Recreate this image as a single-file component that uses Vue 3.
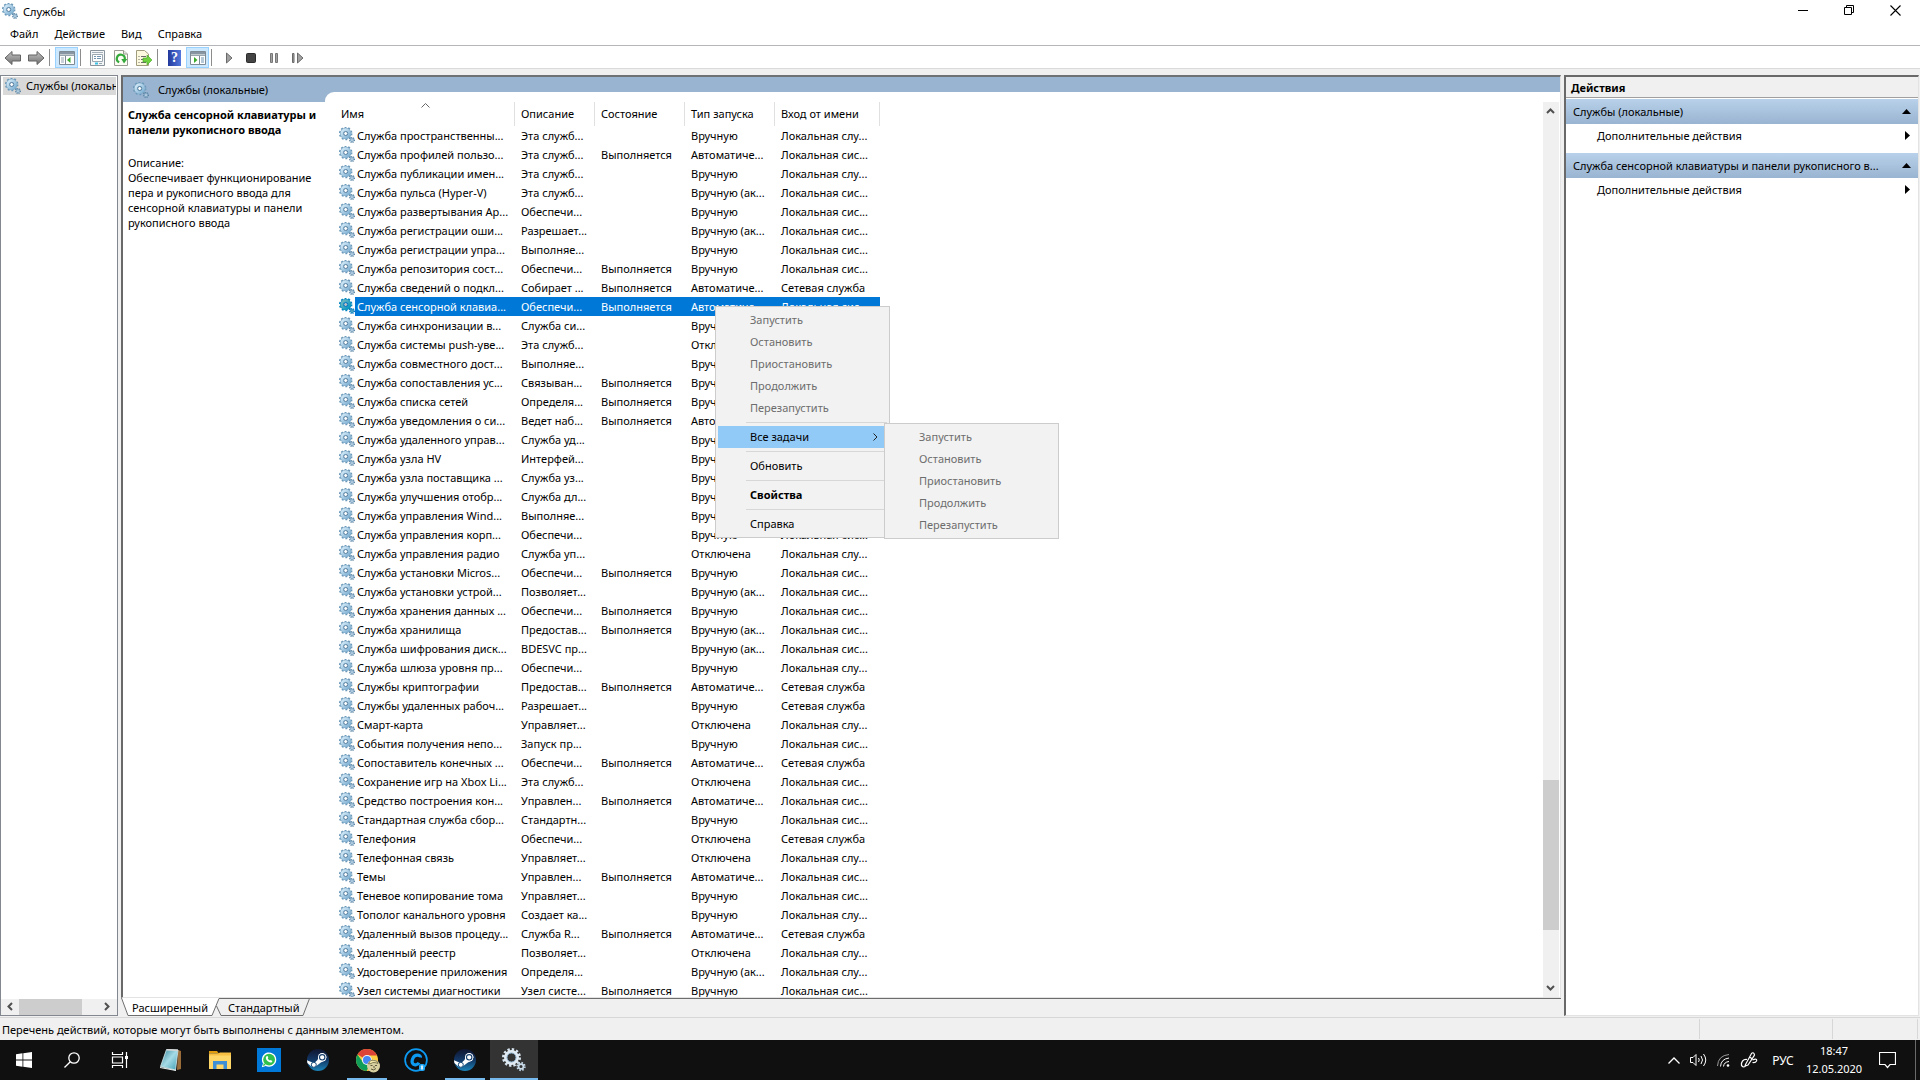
<script setup>
const L = 'Локальная слу...'
const S = 'Локальная сис...'
const N = 'Сетевая служба'
const M = 'Вручную'
const T = 'Вручную (ак...'
const A = 'Автоматиче...'
const D = 'Отключена'
const R = 'Выполняется'

const services = [
  ['Служба пространственны...', 'Эта служб...', '', M, L],
  ['Служба профилей пользо...', 'Эта служб...', R, A, S],
  ['Служба публикации имен...', 'Эта служб...', '', M, L],
  ['Служба пульса (Hyper-V)', 'Эта служб...', '', T, S],
  ['Служба развертывания Ap...', 'Обеспечи...', '', M, S],
  ['Служба регистрации оши...', 'Разрешает...', '', T, S],
  ['Служба регистрации упра...', 'Выполняе...', '', M, S],
  ['Служба репозитория сост...', 'Обеспечи...', R, M, S],
  ['Служба сведений о подкл...', 'Собирает ...', R, A, N],
  ['Служба сенсорной клавиа...', 'Обеспечи...', R, A, S],
  ['Служба синхронизации в...', 'Служба си...', '', M, S],
  ['Служба системы push-уве...', 'Эта служб...', '', D, S],
  ['Служба совместного дост...', 'Выполняе...', '', M, S],
  ['Служба сопоставления ус...', 'Связыван...', R, M, S],
  ['Служба списка сетей', 'Определя...', R, M, L],
  ['Служба уведомления о си...', 'Ведет наб...', R, A, S],
  ['Служба удаленного управ...', 'Служба уд...', '', M, N],
  ['Служба узла HV', 'Интерфей...', '', M, S],
  ['Служба узла поставщика ...', 'Служба уз...', '', M, L],
  ['Служба улучшения отобр...', 'Служба дл...', '', M, S],
  ['Служба управления Wind...', 'Выполняе...', '', M, S],
  ['Служба управления корп...', 'Обеспечи...', '', M, S],
  ['Служба управления радио', 'Служба уп...', '', D, L],
  ['Служба установки Micros...', 'Обеспечи...', R, M, S],
  ['Служба установки устрой...', 'Позволяет...', '', T, S],
  ['Служба хранения данных ...', 'Обеспечи...', R, M, S],
  ['Служба хранилища', 'Предостав...', R, T, S],
  ['Служба шифрования диск...', 'BDESVC пр...', '', T, S],
  ['Служба шлюза уровня пр...', 'Обеспечи...', '', M, L],
  ['Службы криптографии', 'Предостав...', R, A, N],
  ['Службы удаленных рабоч...', 'Разрешает...', '', M, N],
  ['Смарт-карта', 'Управляет...', '', D, L],
  ['События получения непо...', 'Запуск пр...', '', M, S],
  ['Сопоставитель конечных ...', 'Обеспечи...', R, A, N],
  ['Сохранение игр на Xbox Li...', 'Эта служб...', '', D, S],
  ['Средство построения кон...', 'Управлен...', R, A, S],
  ['Стандартная служба сбор...', 'Стандартн...', '', M, S],
  ['Телефония', 'Обеспечи...', '', D, N],
  ['Телефонная связь', 'Управляет...', '', D, L],
  ['Темы', 'Управлен...', R, A, S],
  ['Теневое копирование тома', 'Управляет...', '', M, S],
  ['Тополог канального уровня', 'Создает ка...', '', M, L],
  ['Удаленный вызов процеду...', 'Служба R...', R, A, N],
  ['Удаленный реестр', 'Позволяет...', '', D, L],
  ['Удостоверение приложения', 'Определя...', '', T, L],
  ['Узел системы диагностики', 'Узел систе...', R, M, S],
]
const selected = 9
const columns = ['Имя', 'Описание', 'Состояние', 'Тип запуска', 'Вход от имени']
const menus = ['Файл', 'Действие', 'Вид', 'Справка']
const tasks = ['Запустить', 'Остановить', 'Приостановить', 'Продолжить', 'Перезапустить']
const actionGroups = ['Службы (локальные)', 'Служба сенсорной клавиатуры и панели рукописного в...']
</script>

<template>
  <div class="desktop">
    <svg width="0" height="0" class="defs" aria-hidden="true">
      <defs>
        <linearGradient id="gearFill" x1="0" y1="0" x2="1" y2="1">
          <stop offset="0" stop-color="#d3eaf8" />
          <stop offset="1" stop-color="#7fb0d2" />
        </linearGradient>
        <linearGradient id="steamFill" x1="0" y1="0" x2="0" y2="1">
          <stop offset="0" stop-color="#10152f" />
          <stop offset=".5" stop-color="#123765" />
          <stop offset="1" stop-color="#1b84b8" />
        </linearGradient>
        <linearGradient id="noteFill" x1="0" y1="0" x2="1" y2="1">
          <stop offset="0" stop-color="#2f7f94" />
          <stop offset=".5" stop-color="#a5dbe6" />
          <stop offset="1" stop-color="#3d9db4" />
        </linearGradient>
        <linearGradient id="arrowFill" x1="0" y1="0" x2="0" y2="1">
          <stop offset="0" stop-color="#c4c4c4" />
          <stop offset="1" stop-color="#6f6f6f" />
        </linearGradient>
        <symbol id="gear" viewBox="0 0 16 16">
          <circle cx="6.7" cy="6.5" r="5.8" fill="none" stroke="#6b98b8" stroke-width="1.9" stroke-dasharray="1.9 1.744" />
          <circle cx="6.7" cy="6.5" r="4" fill="none" stroke="#7aa5c4" stroke-width="3.4" />
          <circle cx="6.7" cy="6.5" r="3.8" fill="none" stroke="url(#gearFill)" stroke-width="2.800" />
          <circle cx="6.7" cy="6.5" r="2" fill="#fff" stroke="#4f7b9f" stroke-width="1" />
          <circle cx="13" cy="13" r="2.3" fill="none" stroke="#56809f" stroke-width="1.4" stroke-dasharray="1 .8" />
          <circle cx="13" cy="13" r="1.4" fill="#dcebf5" stroke="#7ba3c2" stroke-width="1.1" />
        </symbol>
        <symbol id="steam" viewBox="0 0 22 22">
          <circle cx="11" cy="11" r="11" fill="url(#steamFill)" />
          <path d="M0 11.2 7 14.2 10.5 11 13 4.8h4l2.4 3-1 3.4-4.5 2.3-4.3 3.2-2.8 1.9-3-1.6L.4 14Z" fill="#fff" />
          <circle cx="15.2" cy="8.3" r="4.2" fill="#fff" />
          <circle cx="15.2" cy="8.3" r="2.7" fill="#fff" stroke="#153e6d" stroke-width="1.1" />
          <circle cx="6.8" cy="15.8" r="2.5" fill="#fff" stroke="#154877" stroke-width="1" />
        </symbol>
      </defs>
    </svg>

    <header class="titlebar">
      <svg class="i16"><use href="#gear" /></svg>
      <h1>Службы</h1>
      <div class="caption">
        <button aria-label="Свернуть"><svg width="11" height="11" viewBox="0 0 11 11"><path d="M0 5.5h10" stroke="#000" /></svg></button>
        <button aria-label="Восстановить"><svg width="11" height="11" viewBox="0 0 11 11" fill="none" stroke="#000"><path d="M.5 2.5h7v7h-7zM2.500 2.500v-2h7v7h-2" /></svg></button>
        <button aria-label="Закрыть"><svg width="11" height="11" viewBox="0 0 11 11"><path d="m.5.5 10 10M10.500.5l-10 10" stroke="#000" stroke-width="1.1" /></svg></button>
      </div>
    </header>

    <nav class="menubar"><button v-for="m in menus" :key="m">{{ m }}</button></nav>

    <div class="toolbar">
      <button aria-label="Назад"><svg class="wide" viewBox="0 0 18 16"><path d="M1 8 8 1.500V5h8.500v6H8v3.500Z" fill="url(#arrowFill)" stroke="#626262" /></svg></button>
      <button aria-label="Вперед"><svg class="wide" viewBox="0 0 18 16"><path d="M17 8 10 1.500V5H1.500v6H10v3.500Z" fill="url(#arrowFill)" stroke="#626262" /></svg></button>
      <i></i>
      <button class="on" aria-label="Дерево консоли"><svg class="i16" viewBox="0 0 16 16"><path d="M.5 1.500h15v13H.5z" fill="#fff" stroke="#7f8b94" /><path d="M1 2h14v2.500H1z" fill="#8796a2" /><path d="M1 5.500h14" stroke="#9aa6ae" /><path d="M6.500 6v8.500" stroke="#7f8b94" /><path d="M2 8h3M2 10h3M2 12h3" stroke="#98a6b0" /><path d="M11.500 7v6L8 10Z" fill="#3bab2c" /></svg></button>
      <i></i>
      <button aria-label="Свойства"><svg class="i16" viewBox="0 0 16 16"><path d="M.5.5h14v15H.5z" fill="#f4f6f7" stroke="#89939b" /><path d="M2 2.500h11" stroke="#a4afb7" /><path d="M2.500 4.500h10v7h-10z" fill="#fff" stroke="#9ba8b2" /><path d="M4 6.500h2M7 6.500h4M4 8.500h2M7 8.500h4" stroke="#7294ae" /><path d="M5 13.500h3" stroke="#3ac0e4" stroke-width="2" /><path d="M9 13.500h3" stroke="#98a6b0" /></svg></button>
      <button aria-label="Обновить"><svg class="i16" viewBox="0 0 16 16"><path d="M1.500.5h9l4 3.500v11.500h-13z" fill="#fdfdf6" stroke="#9a9a94" /><path d="M10.500.5V4h4" fill="#e9e9e2" stroke="#9a9a94" /><path d="M6.200 12.300A4 4 0 1 1 11.800 9" fill="none" stroke="#35a93b" stroke-width="2.200" /><path d="M8.300 9h6l-3.300 4.500z" fill="#35a93b" /></svg></button>
      <button aria-label="Экспорт списка"><svg class="i16" viewBox="0 0 16 16"><path d="M.5.5h8l4 3.500v11.500H.5z" fill="#fdf9df" stroke="#a19c7e" /><path d="M2.500 6.500h1M5 6.500h5M2.500 9.500h1M5 9.500h3M2.500 12.500h1M5 12.500h5" stroke="#6b6b6b" /><path d="M7 8h4V5l5 5-5 5v-3H7Z" fill="#6fd140" stroke="#43a621" stroke-width=".6" /></svg></button>
      <i></i>
      <button class="help" aria-label="Справка"><span>?</span></button>
      <button class="on" aria-label="Область действий"><svg class="i16" viewBox="0 0 16 16"><path d="M.5 1.500h15v13H.5z" fill="#fff" stroke="#7f8b94" /><path d="M1 2h14v2.500H1z" fill="#8796a2" /><path d="M1 5.500h14" stroke="#9aa6ae" /><path d="M9.500 6v8.500" stroke="#7f8b94" /><path d="M11 8h3M11 10h3M11 12h3" stroke="#6e93b0" /><path d="M4 7v6l3.500-3Z" fill="#3bab2c" /></svg></button>
      <i></i>
      <button aria-label="Запустить"><svg class="i16" viewBox="0 0 16 16"><path d="M5.500 3v10l5.500-5Z" fill="#a2a2a2" stroke="#6a6a6a" /></svg></button>
      <button aria-label="Остановить"><svg class="i16" viewBox="0 0 16 16"><rect x="2.500" y="3.500" width="9" height="9" rx="1" fill="#444" stroke="#2b2b2b" /></svg></button>
      <button aria-label="Приостановить"><svg class="i16" viewBox="0 0 16 16"><path d="M3.500 3.500h2v9h-2zM8.500 3.500h2v9h-2z" fill="#a2a2a2" stroke="#777" /></svg></button>
      <button aria-label="Перезапустить"><svg class="i16" viewBox="0 0 16 16"><path d="M2.500 3.500h1.500v9H2.500zM7.500 3v10L13 8Z" fill="#a2a2a2" stroke="#6a6a6a" /></svg></button>
    </div>

    <main>
      <aside class="tree">
        <button class="node"><svg class="i16"><use href="#gear" /></svg><span>Службы (локальные)</span></button>
        <div class="hscroll">
          <svg width="18" height="15" viewBox="0 0 18 15"><path d="M11 4 7.500 7.500 11 11" /></svg>
          <b></b>
          <svg width="19" height="15" viewBox="0 0 19 15"><path d="M7 4l3.500 3.500L7 11" /></svg>
        </div>
      </aside>

      <section class="center">
        <div class="view">
          <div class="banner"><svg class="i16"><use href="#gear" /></svg><h2>Службы (локальные)</h2></div>
          <div class="body">
            <div class="desc">
              <h3>Служба сенсорной клавиатуры и<br>панели рукописного ввода</h3>
              <p>Описание:<br>Обеспечивает функционирование<br>пера и рукописного ввода для<br>сенсорной клавиатуры и панели<br>рукописного ввода</p>
            </div>
            <div class="list">
              <div class="rows">
                <table>
                  <thead>
                    <tr>
                      <th v-for="(c, i) in columns" :key="c" scope="col">
                        <svg v-if="i === 0" class="sort" width="9" height="5" viewBox="0 0 9 5"><path d="m.5 4.500 4-4 4 4" fill="none" stroke="#666" /></svg>{{ c }}
                      </th>
                      <th class="rest"></th>
                    </tr>
                  </thead>
                  <tbody>
                    <tr v-for="(s, i) in services" :key="s[0]" :class="{ sel: i === selected }">
                      <td v-for="(v, j) in s" :key="j"><svg v-if="j === 0" class="i16"><use href="#gear" /></svg><span>{{ v }}</span></td>
                      <td class="rest"></td>
                    </tr>
                  </tbody>
                </table>

                <div class="popup main-menu" role="menu">
                  <button v-for="t in tasks" :key="t" disabled role="menuitem">{{ t }}</button>
                  <hr>
                  <button class="hot" role="menuitem">Все задачи<svg width="5" height="8" viewBox="0 0 5 8"><path d="m.5.5 3.500 3.500L.5 7.500" fill="none" stroke="#222" /></svg></button>
                  <hr>
                  <button role="menuitem">Обновить</button>
                  <hr>
                  <button class="strong" role="menuitem">Свойства</button>
                  <hr>
                  <button role="menuitem">Справка</button>
                  <div class="popup sub-menu" role="menu">
                    <button v-for="t in tasks" :key="t" disabled role="menuitem">{{ t }}</button>
                  </div>
                </div>
              </div>
              <div class="vscroll">
                <svg width="15" height="17" viewBox="0 0 15 17"><path d="M4 11l3.500-3.500L11 11" /></svg>
                <div class="track"><b></b></div>
                <svg width="15" height="17" viewBox="0 0 15 17"><path d="M4 6l3.500 3.500L11 6" /></svg>
              </div>
            </div>
          </div>
        </div>
        <div class="tabs">
          <svg width="8" height="18" viewBox="0 0 8 18"><path d="M0 0 7 17.500h1V0Z" fill="#fff" /><path d="M.5 0 7 17.500h1" fill="none" stroke="#6d6d6d" /></svg>
          <button class="front">Расширенный</button>
          <svg width="14" height="18" viewBox="0 0 14 18"><path d="M0 0v17.500h1L8 0Z" fill="#fff" /><path d="M0 17.500h1L8 .5h6M5.500 8l4.500 9.500h4" fill="none" stroke="#6d6d6d" /></svg>
          <button>Стандартный</button>
          <svg width="8" height="18" viewBox="0 0 8 18"><path d="M0 17.500h1L7.500.5M0 .5h8" fill="none" stroke="#6d6d6d" /></svg>
          <span class="fill"></span>
        </div>
      </section>

      <aside class="actions">
        <h2>Действия</h2>
        <template v-for="g in actionGroups" :key="g">
          <button class="group"><span>{{ g }}</span><svg width="9" height="5" viewBox="0 0 9 5"><path d="M0 5 4.500 0 9 5Z" /></svg></button>
          <button class="more"><span>Дополнительные действия</span><svg width="9" height="9" viewBox="0 0 9 9"><path d="M2 0v9l5-4.500Z" /></svg></button>
        </template>
      </aside>
    </main>

    <footer class="status">
      <span>Перечень действий, которые могут быть выполнены с данным элементом.</span>
      <span class="c1"></span><span class="c2"></span><span class="c3"></span>
    </footer>

    <div class="taskbar">
      <button aria-label="Пуск"><svg width="16" height="16" viewBox="0 0 16 16" fill="#fff"><path d="M0 2.200 6.500 1.300V7.600H0zM7.300 1.200 16 0v7.600H7.300zM0 8.400h6.500v6.300L0 13.800zM7.300 8.400H16V16l-8.700-1.200z" /></svg></button>
      <button aria-label="Поиск"><svg width="16" height="16" viewBox="0 0 16 16" fill="none" stroke="#fff" stroke-width="1.300"><circle cx="10" cy="6" r="5.200" /><path d="M6.300 9.700.5 15.500" /></svg></button>
      <button aria-label="Представление задач"><svg width="18" height="16" viewBox="0 0 18 16" fill="none" stroke="#fff" stroke-width="1.200"><path d="M1.500 0v2.500h10V0M1.500 16v-2.500h10V16M1.500 5h10v6h-10zM15.500 0v16" /><path d="M15.500 4v3" stroke-width="3" /></svg></button>
      <div class="apps">
        <button aria-label="Блокнот"><svg width="24" height="24" viewBox="0 0 24 24"><path d="m19 2 3 1v18l-4 1z" fill="#9a6c3a" /><path d="M7.500 1.500 19 2l-2.500 20-15-3.500z" fill="url(#noteFill)" stroke="#d9edf0" stroke-width=".8" /><path d="m1 19 16 3v1L1 20z" fill="#e9f2f2" /><path d="m8 1 11 .500v1.500L7.500 2.500z" fill="#d6d6d6" /></svg></button>
        <button aria-label="Проводник"><svg width="22" height="18" viewBox="0 0 22 18"><path d="M0 0h8l1.500 2H0z" fill="#e09c0c" /><path d="M0 2.500h22V18H0z" fill="#ffd668" /><path d="M0 2.500h9l2-1h11v3H0z" fill="#f8c043" /><path d="M4 18v-8h14v8h-3.500v-4.500h-7V18z" fill="#3d8fd6" /></svg></button>
        <button aria-label="WhatsApp"><svg width="24" height="24" viewBox="0 0 24 24"><path d="M0 0h24v24H0z" fill="#0078d7" /><path d="M4.800 19.200 6 15.500A7.200 7.200 0 1 1 8.700 18z" fill="#fff" /><circle cx="12.100" cy="11.700" r="5.900" fill="#2fc04e" /><path d="m6 18 .8-3 2 2z" fill="#2fc04e" /><path d="M9.300 8.500c1-1.200 1.500-.5 2 1-.6.700-.7.900.2 1.900.9.900 1.400 1.200 2 .5 1.300.5 2.500 1 1.500 2-1.300 1.300-3.700 0-5-1.400-1.300-1.400-1.500-3-.7-4Z" fill="#fff" /></svg></button>
        <button aria-label="Steam"><svg width="22" height="22"><use href="#steam" /></svg></button>
        <button class="run" aria-label="Google Chrome"><svg width="25" height="25" viewBox="0 0 25 25"><circle cx="12" cy="12" r="11" fill="#ffcd40" /><path d="M12 12 2.500 6.500A11 11 0 0 1 22 7.500H12Z" fill="#dc4437" /><path d="M2.500 6.500a11 11 0 0 0 9 16.500l4-7-7-1Z" fill="#109d58" /><circle cx="12" cy="12" r="5" fill="#f4f4f4" /><circle cx="12" cy="12" r="4" fill="#4486f4" /><circle cx="18.500" cy="18" r="6.500" fill="#d9d0a1" /><path d="M13.500 16q2-5 5-3.500 4-.500 4.500 3-2-1-4-1t-3 1z" fill="#f4e8a8" stroke="#5d5835" stroke-width=".7" /><path d="M15.500 17.500h2M20 17.500h2M16 21q2.500 2 5-.500M19 18v2" fill="none" stroke="#4d492f" stroke-width=".9" /></svg></button>
        <button aria-label="C"><svg width="24" height="24" viewBox="0 0 24 24"><circle cx="12" cy="12" r="10.900" fill="none" stroke="#0c9af2" stroke-width="1.700" /><path d="M16.500 9.500c.3-3-5.800-3.500-7.500.5-2.200 4.500-.2 7.500 3.200 6.700 1.300-.3 2.200-1 2.800-2" fill="none" stroke="#0c9af2" stroke-width="3.200" /><rect x="15" y="16" width="6" height="7" rx="2" fill="#1ea6f6" /><path d="m17 18 2 3m0-3-2 3m1-4v5" stroke="#fff" stroke-width=".8" /></svg></button>
        <button class="run" aria-label="Steam"><svg width="22" height="22"><use href="#steam" /></svg></button>
        <button class="run current" aria-label="Службы"><svg width="24" height="24" viewBox="0 0 24 24"><circle cx="9.500" cy="9.500" r="8" fill="none" stroke="#d7e3ed" stroke-width="3" stroke-dasharray="2.300 1.890" /><circle cx="9.500" cy="9.500" r="6" fill="none" stroke="#dfeaf3" stroke-width="3" /><circle cx="9.500" cy="9.500" r="4.500" fill="none" stroke="#8fb2cc" /><circle cx="19" cy="18.500" r="3.700" fill="none" stroke="#c3d6e5" stroke-width="2" stroke-dasharray="1.500 1.400" /><circle cx="19" cy="18.500" r="2.400" fill="none" stroke="#c9dbe8" stroke-width="1.700" /></svg></button>
      </div>
      <div class="tray">
        <button aria-label="Скрытые значки"><svg width="12" height="7" viewBox="0 0 12 7"><path d="m.5 6.500 5.500-5.500 5.500 5.500" fill="none" stroke="#fff" stroke-width="1.300" /></svg></button>
        <button aria-label="Громкость"><svg width="17" height="14" viewBox="0 0 17 14" fill="none" stroke="#fff"><path d="M.5 4.500h2.500L6 1.500v11L3 9.500H.5zM8.500 5q1.500 2 0 4M11 3q3 4 0 8M13.500 1q4.500 6 0 12" /></svg></button>
        <button aria-label="Сеть"><svg width="13" height="13" viewBox="0 0 13 13" fill="none" stroke="#fff"><path d="M.5 12Q1 1.500 12 .5" stroke="#9a9a9a" /><path d="M3.500 12.500Q4 5 12 4M6.500 12.500Q7 8 12 7.500" /><circle cx="11" cy="11.500" r="1.300" fill="#fff" stroke="none" /></svg></button>
        <button aria-label="Windows Ink"><svg width="18" height="18" viewBox="0 0 18 18" fill="none" stroke="#fff" stroke-width="1.200"><path d="m5.500 13.500 6-11q1.500-1.500 2.500 0t0 2.500l-6 9-3 1zM9.500 6l3 2M7 8.500C3 8 1 11 1.500 14.500q2.500 3 4.500 0M12.500 9q5-2 4 1-1 2-4 1.500" /></svg></button>
        <button class="lang">РУС</button>
        <button class="clock">18:47<br>12.05.2020</button>
        <button class="note" aria-label="Уведомления"><svg width="17" height="17" viewBox="0 0 17 17"><path d="M.5.5h16v12H11l-2.500 3-2.500-3H.5z" fill="none" stroke="#fff" stroke-width="1.200" /></svg></button>
        <span class="peek"></span>
      </div>
    </div>
  </div>
</template>

<style>
body { margin: 0; }
</style>

<style scoped>
.desktop { display: flex; flex-direction: column; height: 100vh; overflow: hidden; background: #f0f0f0; color: #000; font: 11px/15px "Noto Sans", "Open Sans", sans-serif; white-space: nowrap; }
.desktop * { box-sizing: border-box; }
.defs { position: absolute; }
button { display: flex; align-items: center; border: 0; margin: 0; padding: 0; background: none; color: inherit; font: inherit; white-space: nowrap; text-align: left; }
h1, h2, h3, p { margin: 0; font-size: 11px; font-weight: 400; }
svg { flex: none; display: block; }
.i16 { width: 16px; height: 16px; }

.titlebar { display: flex; align-items: center; height: 23px; padding: 0 0 1px 2px; background: #fff; }
.titlebar h1 { margin-left: 5px; }
.caption { display: flex; margin-left: auto; margin-right: 2px; height: 21px; align-self: flex-start; }
.caption button { width: 46px; justify-content: center; }
.menubar { display: flex; height: 23px; padding: 0 0 1px 2px; background: #fff; border-bottom: 1px solid #b4b6ba; }
.menubar button { padding: 0 8px; }
.toolbar { display: flex; align-items: center; height: 23px; padding: 1px 0 0 1px; background: #fff; border-bottom: 1px solid #dadada; }
.toolbar button { width: 23px; height: 21px; justify-content: center; }
.toolbar .wide { width: 18px; height: 16px; }
.toolbar .on { background: #cce8ff; border: 1px solid #99d1ff; }
.toolbar i { width: 8px; height: 17px; border-left: 2px solid transparent; background: linear-gradient(90deg, #8c8c8c 1px, transparent 1px) padding-box; }
.help span { width: 13px; height: 16px; background: linear-gradient(90deg, #23399c, #5277dc); color: #fff; font: bold 14px/16px "Liberation Serif", serif; text-align: center; }

main { display: flex; flex: 1; min-height: 0; padding-top: 6px; }
.tree { display: flex; flex-direction: column; justify-content: space-between; flex: 0 0 118px; min-width: 0; margin-bottom: 1px; border: 1px solid #828790; background: #fff; }
.node { margin: 1px 1px 0 2px; height: 18px; padding: 0 0 1px 2px; background: #d9d9d9; overflow: hidden; }
.node span { margin-left: 5px; }
.hscroll { display: flex; height: 16px; background: #f0f0f0; }
.hscroll b { flex: 0 0 63px; background: #cdcdcd; }
.hscroll svg:last-child { margin-left: auto; }
.hscroll path, .vscroll path { fill: none; stroke: #505050; stroke-width: 2; }

.center { display: flex; flex-direction: column; flex: 1; min-width: 0; margin-left: 3px; }
.view { display: flex; flex-direction: column; flex: 1; min-height: 0; background: #fff; border: 2px solid #696969; border-right: 1px solid #e3e3e3; border-bottom: 1px solid #e3e3e3; border-top-color: #6f7274; }
.banner { display: flex; align-items: center; flex: none; height: 25px; padding-left: 10px; background: #99b4d1; }
.banner h2 { margin-left: 9px; }
.body { display: flex; flex: 1; min-height: 0; }
.desc { flex: 0 0 202px; min-width: 0; padding: 5px 0 0 5px; }
.desc h3 { font-weight: 700; margin-bottom: 18px; line-height: 15px; }
.list { display: flex; flex: 1; min-width: 0; min-height: 0; margin-top: -10px; padding: 10px 1px 0 0; border-top-left-radius: 9px; background: #fff; }
.rows { position: relative; flex: 1; min-width: 0; padding-left: 11px; height: 100%; overflow: hidden; }
table { width: 100%; table-layout: fixed; border-collapse: separate; border-spacing: 0; }
th, td { padding: 0 0 0 6px; height: 19px; line-height: 19px; font-weight: 400; text-align: left; overflow: hidden; }
th { position: relative; height: 24px; padding-bottom: 2px; border-right: 1px solid #e0e0e0; }
th:nth-child(1) { width: 179px; padding-left: 5px; }
th:nth-child(2) { width: 80px; }
th:nth-child(3), th:nth-child(4) { width: 90px; }
th:nth-child(5) { width: 105px; }
th.rest { width: auto; border: 0; }
.sort { position: absolute; left: 85px; top: 1px; }
td:first-child { padding-left: 3px; }
td svg { float: left; margin: 1px 0 0; }
td:first-child span { display: block; margin-left: 16px; padding-left: 2px; height: 19px; }
.sel td { background: #0078d7; color: #fff; }
.sel td:first-child { background: linear-gradient(90deg, #fff 19px, #0078d7 19px); }
.sel td svg { filter: saturate(4) brightness(.75); }
.sel td.rest { background: none; }
.vscroll { display: flex; flex-direction: column; flex: 0 0 16px; background: #f0f0f0; }
.track { flex: 1; display: flex; flex-direction: column; }
.track::before { content: ""; flex: 660; }
.track b { flex: 150; background: #cdcdcd; }
.track::after { content: ""; flex: 50; }

.popup { position: absolute; padding: 2px; border: 1px solid #ccc; background: #f2f2f2; }
.main-menu { left: 390px; top: 204px; width: 175px; }
.sub-menu { left: 168px; top: 116px; width: 175px; }
.popup button { width: 100%; height: 22px; padding: 0 0 1px 32px; }
.popup button:disabled { color: #6d6d6d; }
.popup hr { height: 1px; margin: 3px 0 3px 28px; border: 0; background: #d7d7d7; }
.popup .hot { background: #91c9f7; justify-content: space-between; padding-right: 9px; }
.popup .strong { font-weight: 700; }

.tabs { display: flex; height: 18px; margin-bottom: 1px; }
.tabs svg { height: 18px; }
.tabs button { padding: 0 3px; border-top: 1px solid #6d6d6d; border-bottom: 1px solid #6d6d6d; }
.tabs .front { background: #fff; border-top-color: #fff; }
.fill { flex: 1; border-top: 1px solid #6d6d6d; }

.actions { flex: 0 0 355px; min-width: 0; margin: 0 1px 1px 3px; background: #fff; border: 2px solid #696969; border-right: 1px solid #e3e3e3; border-bottom: 1px solid #e3e3e3; }
.actions h2 { height: 21px; padding-left: 5px; line-height: 21px; font-weight: 700; background: #f0f0f0; border-bottom: 1px solid #a0a0a0; margin-bottom: 1px; }
.actions button { width: 100%; justify-content: space-between; }
.actions .group { height: 25px; padding: 0 7px; background: linear-gradient(#b9d1ea, #99b4d1); }
.actions .more { height: 23px; padding: 0 6px 0 31px; margin-bottom: 6px; }

.status { display: flex; align-items: center; flex: none; height: 23px; border-top: 1px solid #d7d7d7; padding-left: 2px; }
.status .c1 { margin-left: auto; width: 133px; }
.status .c2 { width: 85px; }
.status .c3 { width: 3px; }
.status .c1, .status .c2, .status .c3 { height: 20px; border-left: 1px solid #d7d7d7; }

.taskbar { display: flex; flex: none; height: 40px; background: #101010; color: #fff; }
.taskbar button { width: 48px; justify-content: center; }
.apps { display: flex; gap: 1px; margin-left: 3px; }
.apps .run { background: linear-gradient(#76b9ed, #76b9ed) center bottom / 40px 2px no-repeat; }
.apps .current { background: linear-gradient(#76b9ed, #76b9ed) center bottom / 48px 2px no-repeat #333; }
.tray { display: flex; margin-left: auto; }
.tray button { width: 25px; }
.tray .lang { width: 40px; padding-left: 4px; font-size: 12px; }
.tray .clock { width: 66px; line-height: 18px; text-align: center; }
.tray .note { width: 40px; margin-right: 8px; }
.peek { width: 5px; border-left: 1px solid #6a6a6a; }
</style>
